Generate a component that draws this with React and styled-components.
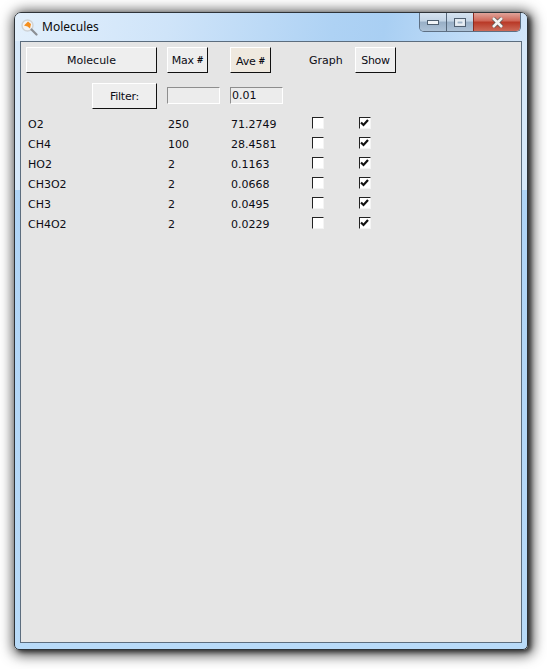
import React from "react";
import styled, { createGlobalStyle } from "styled-components";

const GlobalStyle = createGlobalStyle`
  html, body {
    margin: 0;
    padding: 0;
    background: #fff;
  }
  body {
    width: 547px;
    height: 669px;
    overflow: hidden;
    font-family: "DejaVu Sans", "Liberation Sans", sans-serif;
  }
`;

const Desktop = styled.div`
  padding: 12px 19px 19px 14px;
  width: 514px;
  height: 638px;
`;

const Window = styled.div`
  width: 514px;
  height: 638px;
  box-sizing: border-box;
  display: flex;
  flex-direction: column;
  border: 1px solid #2e3338;
  border-radius: 7px 7px 5px 5px;
  box-shadow: 3px 2px 4px 0 rgba(0, 0, 0, 0.55),
    2px 2px 13px 3px rgba(0, 0, 0, 0.7);
  background: linear-gradient(
    to bottom,
    #d6e8f9 0,
    #d6e8f9 177px,
    #afd4f6 177px,
    #b8daf8 100%
  );
  padding: 0 5px 6px;
`;

const TitleBar = styled.div`
  height: 28px;
  display: flex;
  align-items: flex-start;
  margin: 0 -5px;
  padding: 0 6px;
  border-radius: 6px 6px 0 0;
  background: linear-gradient(
    100deg,
    #e3f0fc 0%,
    #cfe4f9 30%,
    #aed2f4 62%,
    #a9cff3 72%,
    #c5dff8 92%,
    #d2e6fa 100%
  );
`;

const AppIcon = styled.svg`
  width: 17px;
  height: 17px;
  margin-top: 6px;
  flex: none;
`;

const Title = styled.span`
  margin: 6px 0 0 4px;
  font-family: "Noto Sans", "Open Sans", sans-serif;
  font-size: 12px;
  line-height: 16px;
  color: #0a0a0a;
`;

const Controls = styled.div`
  margin-left: auto;
  display: flex;
  height: 18px;
  border: 1px solid #5d6f83;
  border-top: none;
  border-radius: 0 0 5px 5px;
  overflow: hidden;
`;

const ControlButton = styled.div`
  width: ${(p) => p.$w}px;
  display: flex;
  align-items: center;
  justify-content: center;
  border-left: ${(p) => (p.$first ? "none" : "1px solid #55677a")};
  background: linear-gradient(
    to bottom,
    #d5e3f0 0,
    #c3d4e5 45%,
    #98afc6 50%,
    #adc2d7 100%
  );
`;

const CloseButton = styled(ControlButton)`
  border-left: 1px solid #8a2a20;
  background: linear-gradient(
    to bottom,
    #e0a49a 0,
    #d0695a 42%,
    #b93a28 52%,
    #cc6a58 100%
  );
`;

const Panel = styled.div`
  flex: 1;
  background: #e5e5e5;
  border: 1px solid #5c6d7e;
  padding: 5px 5px 0;
  font-size: 11px;
  color: #0c0c14;
`;

const Grid = styled.div`
  display: grid;
  grid-template-columns: 141px 63px 79px 46px 47px;
  align-items: center;
  height: ${(p) => p.$h}px;
  margin-top: ${(p) => p.$mt || 0}px;
`;

const Rows = styled.div`
  margin-top: 5px;
`;

const Button = styled.div`
  box-sizing: border-box;
  width: ${(p) => p.$w}px;
  height: 26px;
  justify-self: ${(p) => (p.$end ? "end" : "start")};
  margin-right: ${(p) => (p.$end ? 10 : 0)}px;
  padding-top: ${(p) => (p.$active ? 2 : 0)}px;
  letter-spacing: ${(p) => (p.$tight ? -0.25 : 0)}px;
  display: flex;
  align-items: center;
  justify-content: center;
  background: ${(p) => (p.$active ? "#efe9df" : "#eeeeee")};
  border-top: 1px solid #fff;
  border-left: 1px solid #fff;
  border-right: 1px solid #111;
  border-bottom: 1px solid #111;
`;

const Hash = styled.span`
  font-size: 8px;
  font-weight: bold;
  margin-left: 3px;
`;

const Field = styled.div`
  box-sizing: border-box;
  width: 53px;
  height: 17px;
  margin-top: -1px;
  padding-left: 1px;
  line-height: 16px;
  background: #ececec;
  border-top: 1px solid #8e8e8e;
  border-left: 1px solid #8e8e8e;
  border-right: 1px solid #fff;
  border-bottom: 1px solid #fff;
`;

const Cell = styled.span`
  margin-top: 1px;
  padding-left: ${(p) => p.$pad ?? 2}px;
  line-height: 20px;
`;

const Check = styled.span`
  box-sizing: border-box;
  display: block;
  width: 12px;
  height: 12px;
  margin-top: -3px;
  margin-left: ${(p) => p.$left}px;
  background: #fff;
  border-top: 1px solid #222;
  border-left: 1px solid #222;
  border-right: 1px solid #f4f4f4;
  border-bottom: 1px solid #f4f4f4;
  svg {
    display: block;
  }
`;

const rows = [
  ["O2", "250", "71.2749"],
  ["CH4", "100", "28.4581"],
  ["HO2", "2", "0.1163"],
  ["CH3O2", "2", "0.0668"],
  ["CH3", "2", "0.0495"],
  ["CH4O2", "2", "0.0229"],
];

const CheckBox = ({ left, checked }) => (
  <Check $left={left}>
    {checked && (
      <svg width="10" height="10" viewBox="0 0 10 10">
        <path d="M1 4.5 L3.5 7 L8 2" fill="none" stroke="#111" strokeWidth="2.2" />
      </svg>
    )}
  </Check>
);

const App = () => {
  return (
    <>
      <GlobalStyle />
      <Desktop>
        <Window>
          <TitleBar>
            <AppIcon viewBox="0 0 17 17">
              <circle cx="6.5" cy="6.5" r="5.5" fill="#f3f3f3" stroke="#cfd3d6" strokeWidth="1.4" />
              <path d="M3 6.5 L7 2.5 L10 5 L9 9.5 L6.5 7.5 Z" fill="#f58f1e" />
              <path d="M10.5 10.5 L15.5 15.5" stroke="#8b8f94" strokeWidth="2.2" strokeLinecap="round" />
            </AppIcon>
            <Title>Molecules</Title>
            <Controls>
              <ControlButton $w={26} $first>
                <svg width="12" height="5" viewBox="0 0 12 5">
                  <rect x="0.5" y="0.5" width="11" height="4" fill="#f2f5f8" stroke="#4f5f70" />
                </svg>
              </ControlButton>
              <ControlButton $w={26}>
                <svg width="12" height="9" viewBox="0 0 12 9">
                  <rect x="0.5" y="0.5" width="11" height="8" fill="#dfe7ef" stroke="#4f5f70" />
                  <rect x="3" y="3" width="6" height="3" fill="#9fb4c8" stroke="#f2f5f8" />
                </svg>
              </ControlButton>
              <CloseButton $w={46}>
                <svg width="13" height="11" viewBox="0 0 13 11">
                  <path d="M2 1 L11 10 M11 1 L2 10" stroke="#5a5452" strokeWidth="4" />
                  <path d="M2 1 L11 10 M11 1 L2 10" stroke="#f4f2f0" strokeWidth="2.6" />
                </svg>
              </CloseButton>
            </Controls>
          </TitleBar>
          <Panel>
            <Grid $h={26}>
              <Button $w={131}>Molecule</Button>
              <Button $w={41} $tight>Max<Hash>#</Hash></Button>
              <Button $w={41} $active $tight>Ave<Hash>#</Hash></Button>
              <Cell $pad={0}>Graph</Cell>
              <Button $w={41} $tight>Show</Button>
            </Grid>
            <Grid $h={26} $mt={10}>
              <Button $w={65} $end $tight>Filter:</Button>
              <Field />
              <Field>0.01</Field>
            </Grid>
            <Rows>
              {rows.map(([name, max, ave]) => (
                <Grid $h={20} key={name}>
                  <Cell>{name}</Cell>
                  <Cell $pad={1}>{max}</Cell>
                  <Cell $pad={1}>{ave}</Cell>
                  <CheckBox left={3} />
                  <CheckBox left={4} checked />
                </Grid>
              ))}
            </Rows>
          </Panel>
        </Window>
      </Desktop>
    </>
  );
};

export default App;
